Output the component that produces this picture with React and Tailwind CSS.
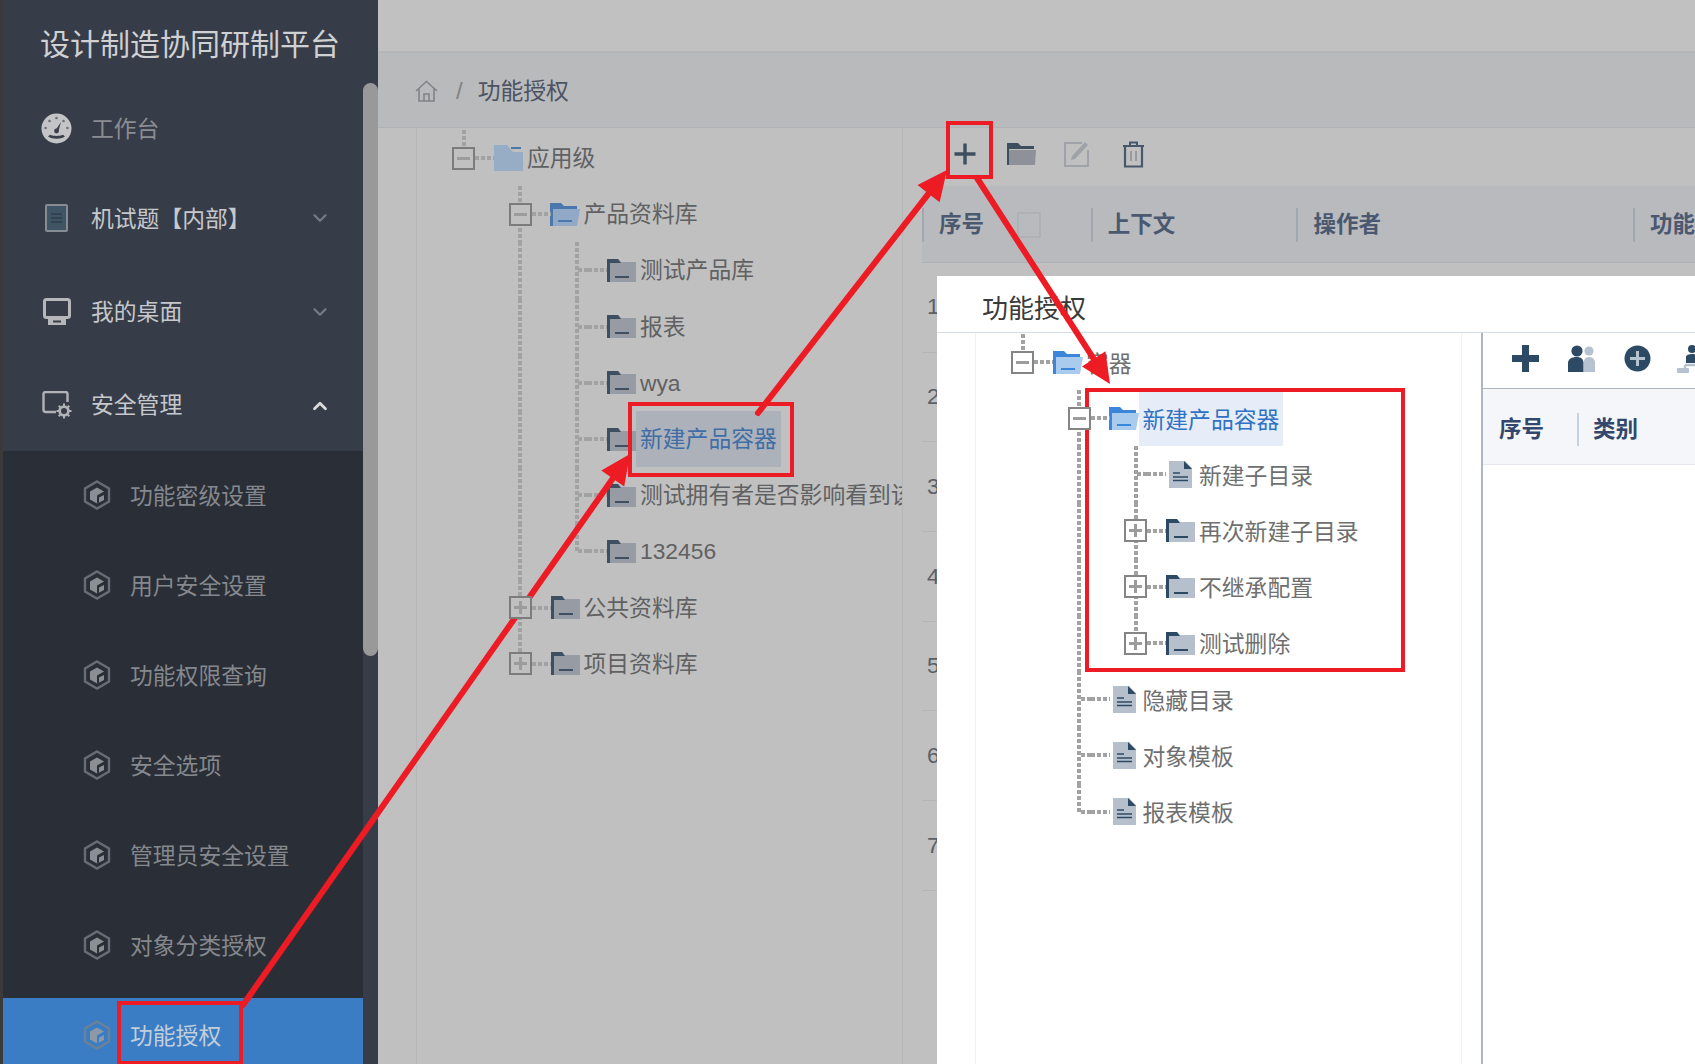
import React from "react";
import { ChevronDown, ChevronUp } from "lucide-react";

const GaugeIcon = () => (
  <svg width="31" height="31" viewBox="0 0 31 31" className="shrink-0">
    <circle cx="15.5" cy="15.5" r="15" fill="#c3c4c6" />
    <path d="M7 23.5c4.5 3 12.5 3 17 0l-2-1.8c-3.8 1.6-9.2 1.6-13 0z" fill="#3b404b" />
    <path d="M14 18l6-9 -2.8 10.2z" fill="#3b404b" />
    <circle cx="15.5" cy="18" r="2.4" fill="#3b404b" />
    <g fill="#6d7078">
      <circle cx="15.5" cy="5" r="1.3" /><circle cx="8.5" cy="8" r="1.3" /><circle cx="4.6" cy="15" r="1.3" /><circle cx="22.5" cy="8" r="1.3" /><circle cx="26.4" cy="15" r="1.3" />
    </g>
  </svg>
);
const BookIcon = () => (
  <svg width="31" height="29" viewBox="0 0 31 29" className="shrink-0">
    <rect x="5" y="1" width="21" height="26" rx="1" fill="#3f5566" stroke="#878c93" strokeWidth="2" />
    <path d="M10 10h11M10 14h11M10 18h11" stroke="#2f3c49" strokeWidth="1.6" />
  </svg>
);
const MonitorIcon = () => (
  <svg width="28" height="27" viewBox="0 0 28 27" className="shrink-0">
    <rect x="1.5" y="1.5" width="25" height="18" rx="2" fill="none" stroke="#b5b7ba" strokeWidth="3" />
    <path d="M4 20h20v1H4z" fill="#b5b7ba" />
    <path d="M5 21h18v6H5z" fill="#b5b7ba" /><rect x="10" y="22.5" width="8" height="2" fill="#373c49" />
  </svg>
);
const GearScreenIcon = () => (
  <svg width="30" height="28" viewBox="0 0 30 28" className="shrink-0">
    <path d="M14 21H3.5a2 2 0 0 1-2-2V3a2 2 0 0 1 2-2h20a2 2 0 0 1 2 2v8" fill="none" stroke="#b0b2b6" strokeWidth="2.4" />
    <circle cx="22" cy="20" r="4.4" fill="none" stroke="#b0b2b6" strokeWidth="2.8" />
    <path d="M22 12.5v3M22 24.500v3M14.500 20h3M26.500 20h3M16.700 14.700l2 2M25.300 23.300l2 2M27.300 14.700l-2 2M18.700 23.300l-2 2" stroke="#b0b2b6" strokeWidth="2" />
  </svg>
);
const HexIcon = ({ stroke = "#686c74", fill = "#8b8e94", cut = "#292e37" }) => (
  <svg width="28" height="30" viewBox="0 0 28 30" className="shrink-0">
    <path d="M14 1.5l12 7v13l-12 7-12-7v-13z" fill="none" stroke={stroke} strokeWidth="2.4" />
    <path d="M14 7.5l7 4v8l-7 4-7-4v-8z" fill={fill} />
    <path d="M14 15.5l7-4v8l-7 4z" fill={cut} />
    <path d="M16 17.5l5-2.5v5l-5 2.5z" fill={fill} />
  </svg>
);

const TopItem = ({ icon, label, color, h, chevron }) => (
  <div className={`flex items-center shrink-0 pl-[38px] ${h}`}>
    <div className="w-[31px] flex justify-center">{icon}</div>
    <span className={`ml-[19px] mt-[2px] text-[22.8px] ${color}`}>{label}</span>
    {chevron === "down" && <ChevronDown className="ml-auto mr-[32px] text-[#777a82]" size={22} strokeWidth={2.4} />}
    {chevron === "up" && <ChevronUp className="ml-auto mr-[32px] mt-[2px] text-[#dcdcdc]" size={22} strokeWidth={3} />}
  </div>
);
const SubItem = ({ label, active }) => (
  <div className={`flex items-center shrink-0 h-[74px] pl-[80px] ${active ? "bg-[#3b7dc4]" : ""}`}>
    {active ? <HexIcon stroke="#6a8198" fill="#8d99a6" cut="#3b7dc4" /> : <HexIcon />}
    <span className={`ml-[19px] mt-[2px] text-[22.8px] ${active ? "text-[#c3ced9]" : "text-[#85888d]"}`}>{label}</span>
  </div>
);

const Sidebar = () => (
  <aside className="flex w-[378px] shrink-0 h-full border-l-[3px] border-[#3b3a39] bg-[#373c49]">
    <nav className="flex-1 min-w-0 h-full overflow-hidden flex flex-col">
      <div className="h-[86px] shrink-0 flex items-center pl-[37px] pt-[2px] text-[30px] text-[#cfd1d3] whitespace-nowrap">设计制造协同研制平台</div>
      <TopItem icon={<GaugeIcon />} label="工作台" color="text-[#8a8d93]" h="h-[85px]" />
      <TopItem icon={<BookIcon />} label="机试题【内部】" color="text-[#c6c8cb]" h="h-[94px]" chevron="down" />
      <TopItem icon={<MonitorIcon />} label="我的桌面" color="text-[#c6c8cb]" h="h-[93px]" chevron="down" />
      <TopItem icon={<GearScreenIcon />} label="安全管理" color="text-[#c6c8cb]" h="h-[93px]" chevron="up" />
      <div className="flex-1 min-h-0 bg-[#292e37] pt-[7px] flex flex-col gap-[16px]">
        {["功能密级设置", "用户安全设置", "功能权限查询", "安全选项", "管理员安全设置", "对象分类授权"].map((t) => <SubItem key={t} label={t} />)}
        <SubItem label="功能授权" active />
      </div>
    </nav>
    <div className="w-[15px] shrink-0 pt-[83px]">
      <div className="h-[573px] bg-[#999999] rounded-full" />
    </div>
  </aside>
);

const Toggle = ({ open, dim }) => (
  <div className={`relative z-10 w-[23px] h-[23px] shrink-0 border-2 flex items-center justify-center ${dim ? "border-[#7c7c7c] bg-[#c0c0c0]" : "border-[#858585] bg-white"}`}>
    <span className="absolute w-[13px] h-[3px] bg-[#9c9c9c]" />
    {!open && <span className="absolute w-[3px] h-[13px] bg-[#9c9c9c]" />}
  </div>
);

const FolderFlat = ({ dim }) => {
  const a = dim ? "#3e4f61" : "#2d4a64";
  const b = dim ? "#969ba4" : "#b6c0cd";
  return (
    <svg width="29" height="23" viewBox="0 0 29 23" className="shrink-0">
      <path d="M0 0h11l3 3h15v20H0z" fill={b} />
      <path d="M0 0h11l3 4H3v19H0z" fill={a} />
      <rect x="8" y="17" width="14" height="2" fill={a} />
    </svg>
  );
};
const FolderOpen = ({ dim }) => {
  const a = dim ? "#4a78ad" : "#3c86da";
  const b = dim ? "#91a9c6" : "#a9cbee";
  return (
    <svg width="30" height="23" viewBox="0 0 30 23" className="shrink-0">
      <path d="M0 0h11l3 3h13v4H0z" fill={a} />
      <path d="M0 6h30l-3 17H0z" fill={b} />
      <path d="M0 3h3v20H0z" fill={a} />
      <rect x="8" y="17" width="14" height="2" fill={a} />
    </svg>
  );
};
const FolderApp = () => (
  <svg width="29" height="26" viewBox="0 0 29 26" className="shrink-0">
    <path d="M0 0h13l6 7h10v19H0z" fill="#97adc5" />
    <rect x="17" y="2" width="10" height="2" fill="#4a78ad" />
  </svg>
);
const DocIcon = () => (
  <svg width="23" height="27" viewBox="0 0 23 27" className="shrink-0">
    <path d="M0 0h16l7 7v20H0z" fill="#b6c0cd" />
    <path d="M15 0l8 8h-8z" fill="#2d4a64" />
    <path d="M4 12h7M4 16h15M4 19.5h15" stroke="#2d4a64" strokeWidth="1.6" />
  </svg>
);

const vDots = "absolute w-[4px] bg-[repeating-linear-gradient(to_bottom,#a2a2a2_0,#a2a2a2_4px,transparent_4px,transparent_6px)]";
const hDots = "h-[4px] bg-[repeating-linear-gradient(to_right,#a2a2a2_0,#a2a2a2_4px,transparent_4px,transparent_6px)]";

function TreeRow({ level, toggle, icon, label, guides = [], half = [], up, selected, dim, text }) {
  return (
    <div className="relative flex items-center h-[56.2px] whitespace-nowrap" style={{ paddingLeft: 35 + 56.5 * level }}>
      {guides.map((g) => (
        <span key={g} className={`${vDots} top-0 bottom-0`} style={{ left: 44.5 + 56.5 * g }} />
      ))}
      {half.map((g) => (
        <span key={g} className={`${vDots} top-0 h-[30px]`} style={{ left: 44.5 + 56.5 * g }} />
      ))}
      {up && <span className={`${vDots} top-0 h-[16px]`} style={{ left: 44.5 + 56.5 * level }} />}
      <div className="relative w-[23px] h-[23px] shrink-0">
        {toggle !== undefined ? <Toggle open={toggle} dim={dim} /> : null}
      </div>
      <div className={`relative w-[19px] shrink-0 ${hDots}`}>
        {toggle === undefined && <span className={`absolute right-full top-0 w-[10px] ${hDots}`} />}
      </div>
      <div className="w-[29px] flex justify-center shrink-0">{icon}</div>
      <span className={`px-[4px] h-[56px] flex items-center text-[22.8px] ${dim ? "" : "pt-[3px]"} ${selected ? (dim ? "bg-[#adb1ba] text-[#3f6ea6]" : "bg-[#e6edf8] text-[#2f72c4]") : text}`}>{label}</span>
    </div>
  );
}

const T = "text-[#606162]";
const T2 = "text-[#6f6f6f]";

const MainTree = () => (
  <div className="w-[487px] shrink-0 overflow-hidden border-x border-[#b5b7ba] pt-[2px]">
    <TreeRow dim level={0} up toggle={true} icon={<FolderApp />} label="应用级" text={T} />
    <TreeRow dim level={1} up guides={[1]} toggle={true} icon={<FolderOpen dim />} label="产品资料库" text={T} />
    {["测试产品库", "报表", "wya", "新建产品容器", "测试拥有者是否影响看到该目录", "132456"].map((l, i) => (
      <TreeRow key={l} dim level={2} guides={i === 5 ? [1] : [1, 2]} half={i === 5 ? [2] : []} icon={<FolderFlat dim />} label={l} selected={i === 3} text={T} />
    ))}
    <TreeRow dim level={1} guides={[1]} toggle={false} icon={<FolderFlat dim />} label="公共资料库" text={T} />
    <TreeRow dim level={1} half={[1]} toggle={false} icon={<FolderFlat dim />} label="项目资料库" text={T} />
  </div>
);

const ModalTree = () => (
  <div className="w-[487px] shrink-0 overflow-hidden border-x border-[#eef1f5] pt-[1px]">
    <TreeRow level={0} up toggle={true} icon={<FolderOpen />} label="容器" text={T2} />
    <TreeRow level={1} guides={[1]} toggle={true} icon={<FolderOpen />} label="新建产品容器" selected text={T2} />
    <TreeRow level={2} guides={[1, 2]} icon={<DocIcon />} label="新建子目录" text={T2} />
    <TreeRow level={2} guides={[1, 2]} toggle={false} icon={<FolderFlat />} label="再次新建子目录" text={T2} />
    <TreeRow level={2} guides={[1, 2]} toggle={false} icon={<FolderFlat />} label="不继承配置" text={T2} />
    <TreeRow level={2} guides={[1]} half={[2]} toggle={false} icon={<FolderFlat />} label="测试删除" text={T2} />
    <TreeRow level={1} guides={[1]} icon={<DocIcon />} label="隐藏目录" text={T2} />
    <TreeRow level={1} guides={[1]} icon={<DocIcon />} label="对象模板" text={T2} />
    <TreeRow level={1} half={[1]} icon={<DocIcon />} label="报表模板" text={T2} />
  </div>
);

const PlusThin = () => (
  <svg width="24" height="24" viewBox="0 0 24 24"><path d="M12 1.5v21M1.5 12h21" stroke="#3f4e5f" strokeWidth="3.4" /></svg>
);
const ToolFolder = () => (
  <svg width="31" height="24" viewBox="0 0 31 24"><path d="M1 1h11l3 3h13v3H1z" fill="#3f4e5f" /><path d="M1 5h2v18H1z" fill="#3f4e5f" /><path d="M3 8h27l-1 15H3z" fill="#8e9298" /></svg>
);
const ToolEdit = () => (
  <svg width="28" height="27" viewBox="0 0 28 27"><path d="M19 2H2v23h23V9" fill="none" stroke="#9fa3a8" strokeWidth="2" /><path d="M8 19l1-4L22 1l3 3L12 18z" fill="#9fa3a8" /></svg>
);
const ToolTrash = () => (
  <svg width="23" height="27" viewBox="0 0 23 27"><path d="M1 5h21M8 5V1.5h7V5" fill="none" stroke="#46586a" strokeWidth="2" /><path d="M3 5v20.500h17V5" fill="none" stroke="#46586a" strokeWidth="2.200" /><path d="M9 10v10M14 10v10" stroke="#8b929a" strokeWidth="1.600" /></svg>
);

const MainPanel = () => (
  <div className="flex-1 min-w-0 flex flex-col bg-[#c0c0c0]">
    <div className="h-[53px] shrink-0 bg-[#c1c1c1] border-b-2 border-[#b4b6b9]" />
    <div className="h-[75px] shrink-0 bg-[#b9babc] border-b border-[#b0b2b6] flex items-center pl-[37px] pt-[2px]">
      <svg width="23" height="22" viewBox="0 0 23 22" fill="none" stroke="#7f8489" strokeWidth="1.6"><path d="M1 11L11.5 1.500 22 11M4 8.500V21h15V8.500M9 21v-7h5v7" /></svg>
      <span className="ml-[18px] text-[24px] text-[#85837f]">/</span>
      <span className="ml-[15px] text-[22.800px] text-[#4c5362]">功能授权</span>
    </div>
    <div className="flex-1 min-h-0 flex pl-[38px]">
      <MainTree />
      <div className="flex-1 min-w-0 ml-[19px] flex flex-col">
        <div className="h-[58px] shrink-0 flex items-center pl-[31px] pb-[6px]">
          <PlusThin />
          <div className="ml-[29px]"><ToolFolder /></div>
          <div className="ml-[26px]"><ToolEdit /></div>
          <div className="ml-[31px]"><ToolTrash /></div>
        </div>
        <div className="h-[77px] shrink-0 flex items-center pt-[2px] bg-[#b8babd] border-b border-[#adb2b9] font-bold text-[22.500px] text-[#4a5870] whitespace-nowrap">
          <div className="w-[169px] flex items-center border-l-2 border-[#a0a7b0] pl-[15px]">
            序号
            <span className="ml-[33px] w-[24px] h-[26px] border-2 border-[#adb2b9]" />
          </div>
          <div className="w-[206px] border-l-2 border-[#a0a7b0] pl-[15px]">上下文</div>
          <div className="w-[337px] border-l-2 border-[#a0a7b0] pl-[15px]">操作者</div>
          <div className="border-l-2 border-[#a0a7b0] pl-[15px]">功能</div>
        </div>
        {[1, 2, 3, 4, 5, 6, 7].map((n) => (
          <div key={n} className="h-[89.700px] shrink-0 flex items-center pl-[5px] border-b border-[#b3b5b8] text-[22.500px] text-[#5a5f68]">{n}</div>
        ))}
      </div>
    </div>
  </div>
);

const Modal = () => (
  <div className="absolute left-[937px] top-[276px] w-[758px] h-[788px] bg-white flex flex-col">
    <div className="h-[57px] shrink-0 border-b border-[#d5dde8] flex items-center pl-[45px] pt-[11px] text-[26px] text-[#3a3a3a]">功能授权</div>
    <div className="flex-1 min-h-0 flex pl-[38px]">
      <ModalTree />
      <div className="flex-1 min-w-0 ml-[19px] border-l-2 border-[#aeb6c4] flex flex-col">
        <div className="h-[56px] shrink-0 border-b border-[#aeb6c4] overflow-hidden flex items-center pl-[29px] pb-[4px]">
          <svg width="27" height="27" viewBox="0 0 27 27" className="shrink-0"><path d="M10 0h7v10h10v7H17v10h-7V17H0v-7h10z" fill="#2c4a63" /></svg>
          <svg className="ml-[29px] shrink-0" width="28" height="27" viewBox="0 0 28 27"><circle cx="21" cy="6" r="4.600" fill="#b6c2cf" /><path d="M16 27V16a5 5 0 0 1 5-4 6 6 0 0 1 6 5v10z" fill="#b6c2cf" /><circle cx="9" cy="6" r="5.600" fill="#2c4a63" /><path d="M0 27v-9c0-4 4-6 8.500-6s7 2 7 6v9z" fill="#2c4a63" /></svg>
          <svg className="ml-[28px] shrink-0" width="27" height="27" viewBox="0 0 27 27"><circle cx="13.500" cy="13.500" r="13" fill="#2c4a63" /><path d="M13.500 6v15M6 13.500h15" stroke="#b6c2cf" strokeWidth="3" /></svg>
          <svg className="ml-[26px] shrink-0" width="27" height="29" viewBox="0 0 27 29"><circle cx="15" cy="5" r="4" fill="#2c4a63" /><path d="M9 19v-6c0-2 3-3 6-3s6 1 6 3v6z" fill="#2c4a63" /><path d="M8 21h18M8 21v4" stroke="#b6c2cf" strokeWidth="2.400" fill="none" /><rect x="0" y="24" width="12" height="5" rx="1" fill="#b6c2cf" /></svg>
        </div>
        <div className="h-[76px] shrink-0 pt-[6px] bg-[#f4f6fa] border-b border-[#e4e8ee] flex items-center font-bold text-[22.500px] text-[#33466b]">
          <span className="pl-[16px] w-[94px]">序号</span>
          <span className="border-l-2 border-[#c5d3e0] pl-[14px]">类别</span>
        </div>
      </div>
    </div>
  </div>
);

function Arrow({ x1, y1, x2, y2 }) {
  const dx = x2 - x1, dy = y2 - y1, L = Math.hypot(dx, dy), ux = dx / L, uy = dy / L;
  const bx = x2 - ux * 30, by = y2 - uy * 30, nx = -uy * 14, ny = ux * 14;
  return (
    <g>
      <line x1={x1} y1={y1} x2={bx} y2={by} stroke="#ed1c24" strokeWidth="6" strokeLinecap="round" />
      <polygon points={`${x2},${y2} ${bx + nx},${by + ny} ${bx - nx},${by - ny}`} fill="#ed1c24" />
    </g>
  );
}

const Annotations = () => (
  <svg className="absolute left-0 top-0 pointer-events-none" width="1695" height="1064" viewBox="0 0 1695 1064">
    <g fill="none" stroke="#ed1c24" strokeWidth="4">
      <rect x="119" y="1003" width="122" height="60" />
      <rect x="630" y="404" width="162" height="71" />
      <rect x="948" y="123" width="43" height="54" />
      <rect x="1087" y="390" width="316" height="280" />
    </g>
    <Arrow x1={243} y1={1005} x2={630} y2={454} />
    <Arrow x1={758} y1={413} x2={947} y2={170} />
    <Arrow x1={977} y1={178} x2={1110} y2={384} />
  </svg>
);

export default function App() {
  return (
    <div className="relative flex w-[1695px] h-[1064px] overflow-hidden font-['Liberation_Sans','Noto_Sans_CJK_SC',sans-serif]">
      <Sidebar />
      <MainPanel />
      <Modal />
      <Annotations />
    </div>
  );
}
